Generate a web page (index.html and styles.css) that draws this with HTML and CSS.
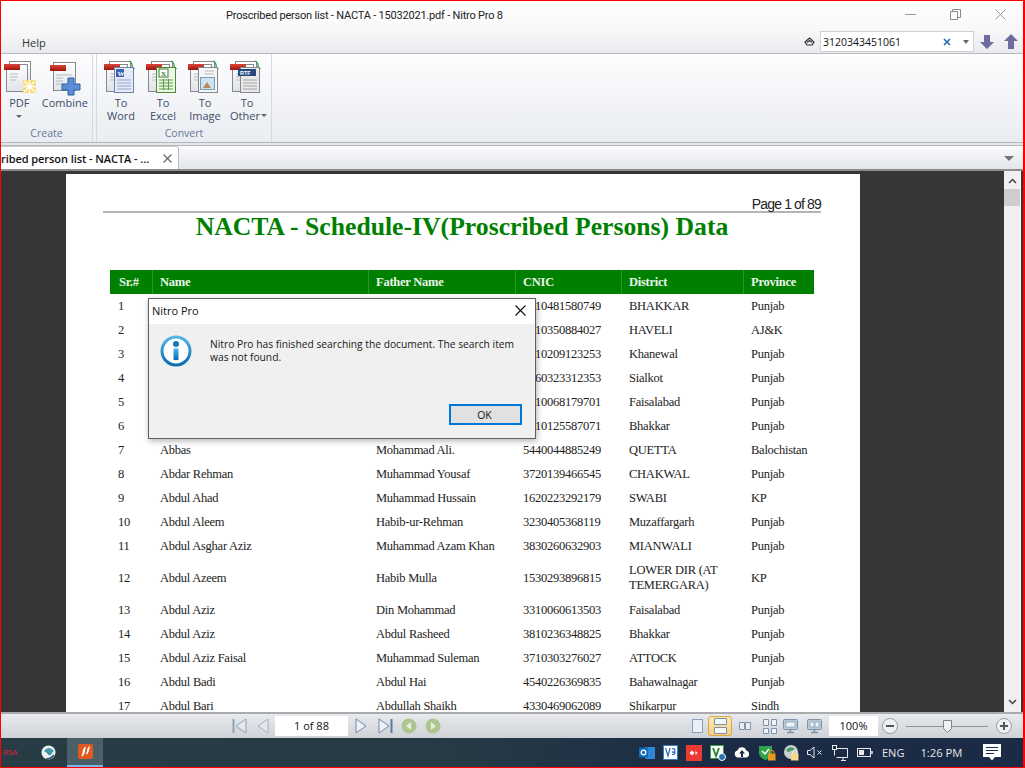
FILE: index.html
```html
<!DOCTYPE html>
<html lang="en">
<head>
<meta charset="utf-8">
<title>Nitro Pro 8</title>
<link rel="stylesheet" href="styles.css">
</head>
<body>
<svg class="defs" width="0" height="0" aria-hidden="true">
  <defs>
    <linearGradient id="pg" x1="0" y1="0" x2="0" y2="1"><stop offset="0" stop-color="#fff"/><stop offset="1" stop-color="#dfe2e6"/></linearGradient>
    <linearGradient id="red" x1="0" y1="0" x2="0" y2="1"><stop offset="0" stop-color="#d8463a"/><stop offset="1" stop-color="#9e1610"/></linearGradient>
    <linearGradient id="info" x1="0" y1="0" x2="0" y2="1"><stop offset="0" stop-color="#54b4e8"/><stop offset="1" stop-color="#0a6cb4"/></linearGradient>
    <symbol id="sheet" viewBox="0 0 36 36">
      <rect x="6.5" y="1.5" width="21" height="27" fill="url(#pg)" stroke="#85888c"/>
      <rect x="3.5" y="4.5" width="21" height="27" fill="url(#pg)" stroke="#85888c"/>
      <rect x="1" y="4" width="16" height="6" fill="url(#red)"/>
      <path d="M7 14h8M7 17h8M7 20h6" stroke="#b8bbc0"/>
    </symbol>
    <symbol id="return" viewBox="0 0 36 36">
      <path d="M26 1q4 2 3 7" fill="none" stroke="#3d9a46" stroke-width="1.3"/>
      <path d="M26 8h6l-3 4z" fill="#2d8a3a"/>
    </symbol>
  </defs>
</svg>

<div class="app">
  <header class="titlebar">
    <span class="title">Proscribed person list - NACTA - 15032021.pdf - Nitro Pro 8</span>
    <div class="winctl">
      <svg width="11" height="11" viewBox="0 0 11 11"><path d="M0 5.5h11" stroke="#9a9a9a"/></svg>
      <svg width="11" height="11" viewBox="0 0 11 11"><path d="M.5 2.5h7v8h-7zM2.5 2.5v-2h8v8h-3" fill="none" stroke="#8a8a8a"/></svg>
      <svg width="11" height="11" viewBox="0 0 11 11"><path d="M.5.5l10 10M10.5.5l-10 10" stroke="#9a9a9a"/></svg>
    </div>
  </header>

  <div class="menubar">
    <span class="menu-help">Help</span>
    <div class="searchtools">
      <svg class="collapse" width="11" height="9" viewBox="0 0 11 9"><path d="M1 5l4.500-4 4.500 4-2 3h-5zM3 5.500l2.500-2 2.500 2" fill="none" stroke="#333" stroke-width="1.2"/></svg>
      <div class="searchbox">
        <span class="searchtext">3120343451061</span>
        <svg width="8" height="8" viewBox="0 0 8 8"><path d="M1 1l6 6M7 1l-6 6" stroke="#2b6ca8" stroke-width="1.600"/></svg>
        <span class="caret-down"></span>
      </div>
      <svg class="arrow" width="14" height="15" viewBox="0 0 14 15"><path d="M4 1h6v7h4l-7 7-7-7h4z" fill="#6e6c9c"/></svg>
      <svg class="arrow" width="14" height="15" viewBox="0 0 14 15"><path d="M7 0l7 7h-4v8H4V7H0z" fill="#6e6c9c"/></svg>
    </div>
  </div>

  <div class="ribbon">
    <section class="group group-create">
      <div class="buttons">
        <div class="rbtn rbtn-pdf">
          <svg class="ricon" width="36" height="36" viewBox="-2 0 36 36">
            <use href="#sheet"/>
            <rect x="20" y="20" width="13" height="13" fill="#f6dc78"/>
            <path d="M26.500 20v13M20 26.500h13M21 21l11 11M32 21l-11 11" stroke="#fff" stroke-width="1.300"/>
          </svg>
          <span>PDF</span>
          <span class="caret-small"></span>
        </div>
        <div class="rbtn rbtn-combine">
          <svg class="ricon" width="36" height="36" viewBox="0 0 36 36">
            <rect x="6.500" y="2.500" width="22" height="28" fill="url(#pg)" stroke="#85888c"/>
            <rect x="3" y="5" width="16" height="6" fill="url(#red)"/>
            <path d="M9 15h16M9 18h7M9 21h7M9 24h7" stroke="#b8bbc0"/>
            <path d="M21 18h6v6h6v6h-6v5h-6v-5h-6v-6h6z" fill="#5b8ed6" stroke="#2f5f9f"/>
          </svg>
          <span>Combine</span>
        </div>
      </div>
      <div class="group-label">Create</div>
    </section>
    <section class="group group-convert">
      <div class="buttons">
        <div class="rbtn">
          <svg class="ricon" width="36" height="36" viewBox="0 0 36 36">
            <use href="#sheet"/><use href="#return"/>
            <rect x="11.500" y="7.500" width="19" height="25" fill="#e4ebf8" stroke="#6d83ac"/>
            <rect x="13" y="9" width="8" height="8" fill="#3d63b0"/>
            <text class="icon-letter" x="14.500" y="16">W</text>
            <path d="M14 20h14M14 23h14M14 26h14M14 29h14" stroke="#90a6cf"/>
          </svg>
          <span>To</span><span>Word</span>
        </div>
        <div class="rbtn">
          <svg class="ricon" width="36" height="36" viewBox="0 0 36 36">
            <use href="#sheet"/><use href="#return"/>
            <rect x="11.500" y="7.500" width="19" height="25" fill="#eef6e8" stroke="#4f8a3a"/>
            <rect x="14" y="9" width="9" height="8" fill="#fff" stroke="#3d8030"/>
            <text class="icon-letter icon-letter-x" x="16" y="16">X</text>
            <path d="M14 20h14M14 23h14M14 26h14M14 29h14M18.500 19v11M23.500 19v11" stroke="#5d9c46"/>
          </svg>
          <span>To</span><span>Excel</span>
        </div>
        <div class="rbtn">
          <svg class="ricon" width="36" height="36" viewBox="0 0 36 36">
            <use href="#sheet"/><use href="#return"/>
            <rect x="11.500" y="7.500" width="19" height="25" fill="#f4f5f6" stroke="#85888c"/>
            <path d="M18 11h9M18 14h9" stroke="#b8bbc0"/>
            <rect x="13.500" y="17.500" width="14" height="12" fill="#cfe3ee" stroke="#7f9cae"/>
            <path d="M16 28l4-6 4 6z" fill="#b58a62"/>
          </svg>
          <span>To</span><span>Image</span>
        </div>
        <div class="rbtn">
          <svg class="ricon" width="36" height="36" viewBox="0 0 36 36">
            <use href="#sheet"/><use href="#return"/>
            <rect x="11.500" y="7.500" width="19" height="25" fill="#e8e8e8" stroke="#85888c"/>
            <rect x="9" y="9" width="18" height="7" fill="#24477f"/>
            <text class="icon-letter icon-letter-rtf" x="11" y="15">RTF</text>
            <path d="M14 20h14M14 23h14M14 26h14M14 29h14" stroke="#a4a6a8"/>
          </svg>
          <span>To</span><span class="with-caret">Other<i class="caret-small"></i></span>
        </div>
      </div>
      <div class="group-label">Convert</div>
    </section>
  </div>

  <div class="tabbar">
    <div class="tab">
      <span class="tab-name">ribed person list - NACTA - ...</span>
      <svg width="9" height="9" viewBox="0 0 9 9"><path d="M.5.5l8 8M8.500.5l-8 8" stroke="#6a6a6a" stroke-width="1.200"/></svg>
    </div>
    <span class="tab-menu"></span>
  </div>

  <main class="docarea">
    <div class="viewport">
      <article class="page">
        <div class="pageno">Page 1 of 89</div>
        <h1 class="doctitle">NACTA - Schedule-IV(Proscribed Persons) Data</h1>
        <div class="table">
          <div class="row head"><div>Sr.#</div><div>Name</div><div>Father Name</div><div>CNIC</div><div>District</div><div>Province</div></div>
          <div class="row"><div>1</div><div></div><div></div><div class="cut">10481580749</div><div>BHAKKAR</div><div>Punjab</div></div>
          <div class="row"><div>2</div><div></div><div></div><div class="cut">10350884027</div><div>HAVELI</div><div>AJ&amp;K</div></div>
          <div class="row"><div>3</div><div></div><div></div><div class="cut">10209123253</div><div>Khanewal</div><div>Punjab</div></div>
          <div class="row"><div>4</div><div></div><div></div><div class="cut">60323312353</div><div>Sialkot</div><div>Punjab</div></div>
          <div class="row"><div>5</div><div></div><div></div><div class="cut">10068179701</div><div>Faisalabad</div><div>Punjab</div></div>
          <div class="row"><div>6</div><div></div><div></div><div class="cut">10125587071</div><div>Bhakkar</div><div>Punjab</div></div>
          <div class="row"><div>7</div><div>Abbas</div><div>Mohammad Ali.</div><div>5440044885249</div><div>QUETTA</div><div>Balochistan</div></div>
          <div class="row"><div>8</div><div>Abdar Rehman</div><div>Muhammad Yousaf</div><div>3720139466545</div><div>CHAKWAL</div><div>Punjab</div></div>
          <div class="row"><div>9</div><div>Abdul Ahad</div><div>Muhammad Hussain</div><div>1620223292179</div><div>SWABI</div><div>KP</div></div>
          <div class="row"><div>10</div><div>Abdul Aleem</div><div>Habib-ur-Rehman</div><div>3230405368119</div><div>Muzaffargarh</div><div>Punjab</div></div>
          <div class="row"><div>11</div><div>Abdul Asghar Aziz</div><div>Muhammad Azam Khan</div><div>3830260632903</div><div>MIANWALI</div><div>Punjab</div></div>
          <div class="row tall"><div>12</div><div>Abdul Azeem</div><div>Habib Mulla</div><div>1530293896815</div><div>LOWER DIR (AT TEMERGARA)</div><div>KP</div></div>
          <div class="row"><div>13</div><div>Abdul Aziz</div><div>Din Mohammad</div><div>3310060613503</div><div>Faisalabad</div><div>Punjab</div></div>
          <div class="row"><div>14</div><div>Abdul Aziz</div><div>Abdul Rasheed</div><div>3810236348825</div><div>Bhakkar</div><div>Punjab</div></div>
          <div class="row"><div>15</div><div>Abdul Aziz Faisal</div><div>Muhammad Suleman</div><div>3710303276027</div><div>ATTOCK</div><div>Punjab</div></div>
          <div class="row"><div>16</div><div>Abdul Badi</div><div>Abdul Hai</div><div>4540226369835</div><div>Bahawalnagar</div><div>Punjab</div></div>
          <div class="row"><div>17</div><div>Abdul Bari</div><div>Abdullah Shaikh</div><div>4330469062089</div><div>Shikarpur</div><div>Sindh</div></div>
        </div>
      </article>
    </div>
    <div class="scrollbar">
      <svg class="sb-arrow" width="9" height="6" viewBox="0 0 9 6"><path d="M1 5l3.500-3.500L8 5" fill="none" stroke="#444" stroke-width="1.500"/></svg>
      <div class="sb-thumb"></div>
      <svg class="sb-arrow sb-bottom" width="9" height="6" viewBox="0 0 9 6"><path d="M1 1l3.500 3.500L8 1" fill="none" stroke="#444" stroke-width="1.500"/></svg>
    </div>
  </main>

  <footer class="statusbar">
    <div class="nav">
      <svg width="15" height="16" viewBox="0 0 15 16"><path d="M1.500 1v14" stroke="#8fa3b8" stroke-width="2"/><path d="M14 1v14L4 8z" fill="#e4e8ee" stroke="#8fa3b8"/></svg>
      <svg width="13" height="16" viewBox="0 0 13 16"><path d="M12 1v14L2 8z" fill="#e4e8ee" stroke="#a4b2c2"/></svg>
      <div class="pagebox">1 of 88</div>
      <svg width="13" height="16" viewBox="0 0 13 16"><path d="M1 1v14l10-7z" fill="#eef1f6" stroke="#6f8bab"/></svg>
      <svg class="nav-last" width="15" height="16" viewBox="0 0 15 16"><path d="M1 1v14l10-7z" fill="#eef1f6" stroke="#6f8bab"/><path d="M13.500 1v14" stroke="#5a7a9e" stroke-width="2"/></svg>
      <svg class="nav-back" width="16" height="16" viewBox="0 0 16 16"><circle cx="8" cy="8" r="7.500" fill="#aec592"/><path d="M10 4v8L5 8z" fill="#e8efdc"/></svg>
      <svg class="nav-fwd" width="16" height="16" viewBox="0 0 16 16"><circle cx="8" cy="8" r="7.500" fill="#aec592"/><path d="M6 4v8l5-4z" fill="#e8efdc"/></svg>
    </div>
    <div class="viewtools">
      <svg width="11" height="14" viewBox="0 0 11 14"><rect x=".5" y=".5" width="10" height="13" fill="#eaf0f7" stroke="#8aa0b8"/></svg>
      <div class="view-on"><svg width="13" height="16" viewBox="0 0 13 16"><path d="M.5.500h12v6H.5zM.5 9.500h12v6H.5z" fill="#f4f7fb" stroke="#7d93ad"/></svg></div>
      <svg class="vt-two" width="12" height="10" viewBox="0 0 12 10"><path d="M.5 1.500h5v7h-5zM6.500 1.500h5v7h-5z" fill="#e8eef5" stroke="#7d93ad"/></svg>
      <svg class="vt-four" width="16" height="15" viewBox="0 0 16 15"><path d="M1.500.500h5v6h-5zM9.500.500h5v6h-5zM1.500 9.500h5v5h-5zM9.500 9.500h5v5h-5z" fill="#f0f4f8" stroke="#7d93ad"/></svg>
      <svg class="vt-screen" width="15" height="15" viewBox="0 0 15 15"><rect x=".5" y=".5" width="14" height="10" rx="1" fill="#b8cbdc" stroke="#7f93a8"/><rect x="3" y="3" width="9" height="5" fill="#edf2f7" stroke="#7f93a8" stroke-width=".6"/><path d="M4 13.500h7M7.500 11v2" stroke="#8494a4" stroke-width="1.500"/></svg>
      <svg class="vt-screen2" width="15" height="15" viewBox="0 0 15 15"><rect x=".5" y=".5" width="14" height="10" rx="1" fill="#b8cbdc" stroke="#7f93a8"/><path d="M3 3h4v5H3zM8 3h4v5H8z" fill="#edf2f7" stroke="#7f93a8" stroke-width=".6"/><path d="M4 13.500h7M7.500 11v2" stroke="#8494a4" stroke-width="1.500"/></svg>
      <div class="zoombox">100%</div>
      <svg class="zm-minus" width="16" height="16" viewBox="0 0 16 16"><circle cx="8" cy="8" r="7.500" fill="#eef0f3" stroke="#9a9fa6"/><path d="M4 8h8" stroke="#555" stroke-width="2"/></svg>
      <div class="slider"><svg class="thumb" width="9" height="13" viewBox="0 0 9 13"><path d="M.5.500h8v8l-4 4-4-4z" fill="#eef0f3" stroke="#80858c"/></svg></div>
      <svg class="zm-plus" width="16" height="16" viewBox="0 0 16 16"><circle cx="8" cy="8" r="7.500" fill="#eef0f3" stroke="#9a9fa6"/><path d="M4 8h8M8 4v8" stroke="#555" stroke-width="2"/></svg>
    </div>
  </footer>

  <div class="taskbar">
    <span class="rsa">RSA</span>
    <svg class="tb-globe" width="15" height="15" viewBox="0 0 15 15"><circle cx="7.500" cy="7.500" r="7" fill="#eef2f2"/><path d="M3 6q5-6 10 0-2 1-3 4-3 1-4-2z" fill="#3f97a8"/><path d="M5 14q5 0 8-4" fill="none" stroke="#27506b" stroke-width="1.500"/></svg>
    <div class="tb-app">
      <svg width="15" height="15" viewBox="0 0 15 15"><rect width="15" height="15" rx="2" fill="#e0591f"/><path d="M3.500 13l1.500-7q.5-3 3-3.500L6.500 9q-.5 2.500-3 4zM8 10.500l1.500-6q.5-2 2.500-2.500l-1.300 5.500q-.5 2.500-2.700 3z" fill="#fff"/></svg>
    </div>
    <div class="tray">
      <svg width="16" height="15" viewBox="0 0 16 15"><rect x="6" y="2" width="10" height="12" fill="#2f86d0"/><rect y="2.500" width="9" height="10" fill="#0f6cbd"/><circle cx="4.500" cy="7.500" r="2.300" fill="none" stroke="#fff" stroke-width="1.300"/></svg>
      <svg class="t-v2" width="15" height="15" viewBox="0 0 15 15"><rect width="15" height="15" fill="#fff"/><rect x=".5" y=".5" width="14" height="14" fill="none" stroke="#3d79c4"/><path d="M2.500 3l2.500 8 2-8M9 4q3-1 3 1.500T9 7q3-.5 3 1t-3 1.500" fill="none" stroke="#2f6cb8" stroke-width="1.200"/></svg>
      <svg class="t-red" width="16" height="16" viewBox="0 0 16 16"><rect width="16" height="16" fill="#ea3a32"/><path d="M3.500 8l2.500-2.500L8.500 8 6 10.500z M9.500 6l2 2-2 2z" fill="#fff"/></svg>
      <svg class="t-v" width="16" height="16" viewBox="0 0 16 16"><rect x=".5" y=".5" width="13" height="13" fill="#fff" stroke="#3a9a46"/><path d="M3 3l3 8 3-8" fill="none" stroke="#2d8a3a" stroke-width="2"/><circle cx="12" cy="12" r="3.500" fill="#2b6cab" stroke="#fff"/></svg>
      <svg class="t-cloud" width="16" height="11" viewBox="0 0 16 11"><path d="M4 10.500a3.500 3.500 0 0 1-.5-6.900 4.500 4.500 0 0 1 8.700 0A3.500 3.500 0 0 1 12 10.500z" fill="#fff"/><path d="M8 3l3 3.500H9V10H7V6.500H5z" fill="#1b2b45"/></svg>
      <svg class="t-shield" width="17" height="16" viewBox="0 0 17 16"><path d="M0 1h13v8q-1 4-6.500 6Q1 13 0 9z" fill="#2fa24a"/><path d="M3 6l3 3 4-5" fill="none" stroke="#fff" stroke-width="1.500"/><rect x="9" y="8.500" width="7.500" height="7" fill="#e79a1f"/><path d="M10.500 8.500V7a2.300 2.300 0 0 1 4.500 0v1.500" fill="none" stroke="#e79a1f"/></svg>
      <svg class="t-lock" width="15" height="16" viewBox="0 0 15 16"><circle cx="7" cy="7" r="7" fill="#c9d2cf"/><path d="M2 5q4-5 9-1-2 2-5 2-1 3-4-1z" fill="#4d9a68"/><rect x="7" y="8.500" width="7.500" height="7" fill="#f3d98a"/><path d="M8.500 8.500V7a2.300 2.300 0 0 1 4.500 0v1.500" fill="none" stroke="#f3f3f3"/></svg>
      <svg class="t-spk" width="16" height="13" viewBox="0 0 16 13"><path d="M.5 4.500h2.500L7 1v11L3 8.500H.5z" fill="none" stroke="#e6e8ea"/><path d="M10.500 4.500l4 4M14.500 4.500l-4 4" stroke="#e6e8ea"/></svg>
      <svg class="t-net" width="16" height="16" viewBox="0 0 16 16"><path d="M4.500 3.500h11v9h-11M9 15.500h5M11 12.500v3" fill="none" stroke="#e6e8ea"/><rect x=".5" y=".5" width="4" height="4" fill="#1b2b45" stroke="#e6e8ea"/><path d="M2.500 4.500v6" stroke="#e6e8ea"/></svg>
      <svg class="t-bat" width="16" height="9" viewBox="0 0 16 9"><rect x=".5" y=".5" width="13" height="8" fill="none" stroke="#e6e8ea"/><rect x="2" y="2" width="5" height="5" fill="#e6e8ea"/><path d="M15 3v3" stroke="#e6e8ea" stroke-width="1.500"/></svg>
      <span class="t-eng">ENG</span>
      <span class="t-time">1:26 PM</span>
      <svg class="t-note" width="18" height="17" viewBox="0 0 18 17"><path d="M0 0h18v13h-6l-3 3.500L6 13H0z" fill="#fff"/><path d="M3 3.500h12M3 6.500h12M3 9.500h8" stroke="#1b2b45"/></svg>
    </div>
  </div>

  <div class="dialog" role="dialog">
    <div class="dlg-title">
      <span>Nitro Pro</span>
      <svg width="11" height="11" viewBox="0 0 11 11"><path d="M.5.500l10 10M10.500.500l-10 10" stroke="#111" stroke-width="1.100"/></svg>
    </div>
    <div class="dlg-body">
      <svg class="dlg-icon" width="32" height="32" viewBox="0 0 32 32">
        <circle cx="16" cy="16" r="14" fill="#fff" stroke="url(#info)" stroke-width="3"/>
        <circle cx="16" cy="9" r="3" fill="#0f78bf"/>
        <path d="M13.500 13.500h5v11.500h-5z" fill="url(#info)"/>
      </svg>
      <p class="dlg-text">Nitro Pro has finished searching the document. The search item was not found.</p>
    </div>
    <div class="dlg-foot"><div class="dlg-ok">OK</div></div>
  </div>
</div>
</body>
</html>
```

FILE: styles.css
```css
* { box-sizing: border-box; }
html, body { margin: 0; padding: 0; }
body { width: 1025px; height: 768px; overflow: hidden; font-family: "Open Sans", "Noto Sans", sans-serif; }
.defs { position: absolute; }

.app {
  position: relative;
  width: 1025px;
  height: 768px;
  display: flex;
  flex-direction: column;
  border: solid #f00;
  border-width: 1px 2px 1px 1px;
  background: #e4e6ea;
  overflow: hidden;
}

/* title */
.titlebar {
  flex: none;
  height: 29px;
  position: relative;
  display: flex;
  align-items: center;
  padding-left: 225px;
  background: linear-gradient(#fff, #f8f8f9);
}
.title { font-family: Roboto, sans-serif; font-size: 11px; letter-spacing: -.2px; color: #222; }
.winctl { position: absolute; right: 17px; top: 8px; display: flex; gap: 34px; }

.menubar {
  flex: none;
  height: 24px;
  display: flex;
  align-items: center;
  justify-content: space-between;
  padding: 0 5px 0 21px;
  background: linear-gradient(#f8f8f9, #e9eaee);
  border-bottom: 1px solid #b6b9bf;
}
.menu-help { font-size: 11px; color: #333; margin-top: 2px; }
.searchtools { display: flex; align-items: center; }
.collapse { margin-right: 5px; }
.searchbox {
  width: 154px;
  height: 21px;
  display: flex;
  align-items: center;
  padding: 0 4px 0 2px;
  background: #fff;
  border: 1px solid #cfd1d5;
}
.searchtext { flex: 1; font-size: 10.5px; color: #111; }
.caret-down { width: 0; height: 0; margin-left: 12px; border: 3.5px solid transparent; border-top: 4px solid #666; border-bottom: 0; }
.arrow { margin-left: 6px; }
.arrow + .arrow { margin-left: 10px; }

/* ribbon */
.ribbon {
  flex: none;
  height: 89px;
  display: flex;
  gap: 3px;
  background: linear-gradient(#fdfdfe, #e9ecf1);
  border-bottom: 1px solid #b3b6bb;
}
.group {
  display: flex;
  flex-direction: column;
  height: 88px;
  border-right: 1px solid #d4d9e2;
}
.group-create { width: 92px; }
.group-convert { width: 176px; border-left: 1px solid #d4d9e2; }
.buttons { flex: none; height: 69px; display: flex; }
.group-convert .buttons { padding-left: 3px; }
.rbtn {
  width: 42px;
  display: flex;
  flex-direction: column;
  align-items: center;
  padding-top: 5px;
  font-size: 11px;
  line-height: 13px;
  color: #3e4d68;
}
.ricon { flex: none; margin-top: 1px; height: 36px; }
.rbtn-pdf { width: 37px; }
.rbtn-combine { width: 55px; }
.caret-small {
  display: block;
  width: 0;
  height: 0;
  margin-top: 6px;
  border: 3px solid transparent;
  border-top: 3px solid #666;
  border-bottom: 0;
}
.with-caret { display: flex; align-items: center; margin-left: 3px; }
.with-caret .caret-small { margin: 0 0 0 1px; }
.group-label { height: 20px; text-align: center; font-size: 10.5px; line-height: 20px; color: #69789a; }
.icon-letter { font: bold 7px "Liberation Serif", serif; fill: #fff; }
.icon-letter-x { fill: #2d7a2a; }
.icon-letter-rtf { font: bold 5.5px "Liberation Sans", sans-serif; }

/* tabs */
.tabbar {
  flex: none;
  height: 26px;
  display: flex;
  justify-content: space-between;
  align-items: flex-end;
  margin-top: 2px;
  padding-right: 9px;
  border-top: 1px solid #b3b6bb;
  background: linear-gradient(#fbfbfc, #e2e5eb);
  border-bottom: 2px solid #8d8d8d;
}
.tab {
  width: 178px;
  height: 23px;
  display: flex;
  align-items: center;
  justify-content: space-between;
  padding-right: 6px;
  background: #fff;
  border-right: 1px solid #b9bcc2;
  border-top: 1px solid #c8cbd0;
  border-top-right-radius: 3px;
  overflow: hidden;
}
.tab-name { font-size: 11px; font-weight: 600; letter-spacing: -.07px; color: #111; white-space: nowrap; }
.tab-menu { width: 0; height: 0; margin-bottom: 8px; border: 5px solid transparent; border-top: 5px solid #757575; border-bottom: 0; }

/* document */
.docarea {
  flex: 1;
  min-height: 0;
  display: flex;
  background: #363636;
}
.viewport { flex: 1; min-width: 0; overflow: hidden; padding: 3px 0 0 65px; }
.page { width: 794px; height: 700px; padding: 21px 39px 0 37px; background: #fff; }
.pageno {
  height: 18px;
  text-align: right;
  font: 14px/18px "Liberation Sans", sans-serif;
  letter-spacing: -.85px;
  color: #222;
  border-bottom: 2px solid #b4b4b4;
}
.doctitle {
  margin: -1px 0 0;
  height: 58px;
  text-align: center;
  font: bold 25.7px/30px "Liberation Serif", serif;
  color: #008000;
}
.table { margin: 0 7px; width: 704px; font: 12.5px/15px "Liberation Serif", serif; letter-spacing: -.25px; color: #222; }
.row {
  display: grid;
  grid-template-columns: 42px 216px 147px 106px 122px 71px;
  height: 24px;
}
.row > div { display: flex; align-items: center; padding-left: 8px; }
.row.tall { height: 40px; }
.head { background: #008000; color: #eaf5ea; font-weight: bold; }
.head > div { border-left: 1px solid #2c962c; padding-left: 7px; }
.head > div:first-child { border-left: 0; padding-left: 9px; }
.row > .cut { padding-left: 20px; }

.scrollbar {
  flex: none;
  width: 17px;
  margin-right: 2px;
  display: flex;
  flex-direction: column;
  align-items: center;
  background: #f0f0f0;
  position: relative;
  border-right: 1px solid #fff;
}
.sb-arrow { margin-top: 7px; }
.sb-thumb { width: 100%; height: 17px; margin-top: 5px; background: #cdcdcd; }
.sb-bottom { margin-top: auto; margin-bottom: 7px; }

/* status */
.statusbar {
  flex: none;
  height: 26px;
  display: flex;
  align-items: center;
  background: linear-gradient(#e8eaee, #ced1d6);
  border-top: 2px solid #a9abae;
}
.nav { display: flex; align-items: center; padding-left: 231px; gap: 9px; }
.pagebox, .zoombox {
  height: 20px;
  background: #fff;
  text-align: center;
  font-size: 11px;
  line-height: 20px;
  color: #111;
}
.pagebox { width: 73px; margin: 0 -2px 0 -3px; }
.nav-last { margin-left: 1px; }
.nav-back { margin-left: -1px; }
.nav-fwd { margin-left: -1px; }
.viewtools { display: flex; align-items: center; margin-left: auto; padding-right: 11px; }
.view-on {
  width: 24px;
  height: 20px;
  margin-left: 5px;
  display: flex;
  align-items: center;
  justify-content: center;
  background: linear-gradient(#fbe8b4, #f5cf7e);
  border: 1px solid #d8a94e;
  border-radius: 3px;
}
.vt-two { margin-left: 7px; }
.vt-four { margin-left: 11px; }
.vt-screen { margin-left: 5px; }
.vt-screen2 { margin-left: 9px; }
.zoombox { width: 49px; margin-left: 7px; }
.zm-minus { margin-left: 4px; }
.slider { width: 82px; height: 1px; margin-left: 8px; background: #8f9296; position: relative; }
.thumb { position: absolute; left: 37px; top: -6px; }
.zm-plus { margin-left: 8px; }

/* taskbar */
.taskbar {
  flex: none;
  height: 29px;
  display: flex;
  align-items: center;
  background: linear-gradient(90deg, #273c45, #263a45 45%, #1b2b45 70%);
  padding-left: 2px;
}
.rsa { width: 38px; font: 7px "Liberation Sans", sans-serif; color: #e0203a; }
.tb-globe { flex: none; }
.tb-app {
  width: 36px;
  height: 29px;
  margin-left: 11px;
  display: flex;
  align-items: center;
  justify-content: center;
  background: #4a5f68;
  border-bottom: 2px solid #76b9ed;
}
.tray { display: flex; align-items: center; margin-left: 536px; }
.t-v2 { margin-left: 8px; }
.t-red { margin-left: 8px; }
.t-v { margin-left: 8px; }
.t-cloud { margin-left: 8px; }
.t-shield { margin-left: 9px; }
.t-lock { margin-left: 8px; }
.t-spk { margin-left: 8px; }
.t-net { margin-left: 9px; }
.t-bat { margin-left: 9px; }
.t-eng { margin-left: 9px; font-size: 11px; color: #e6e8ea; }
.t-time { margin-left: 16px; font-size: 11.25px; color: #e6e8ea; }
.t-note { margin-left: 21px; }

/* dialog */
.dialog {
  position: absolute;
  left: 147px;
  top: 297px;
  width: 388px;
  height: 141px;
  display: flex;
  flex-direction: column;
  background: #f0f0f0;
  border: 1px solid #5f6062;
  box-shadow: 1px 2px 6px rgba(0, 0, 0, .3);
}
.dlg-title {
  flex: none;
  height: 25px;
  display: flex;
  align-items: center;
  justify-content: space-between;
  padding: 0 9px 2px 3px;
  background: #fff;
  font-size: 11px;
  color: #111;
}
.dlg-body { flex: 1; display: flex; padding: 11px 8px 0 11px; }
.dlg-icon { flex: none; }
.dlg-text { width: 316px; margin: 3px 0 0 18px; font-size: 10.25px; line-height: 13px; color: #1a1a1a; }
.dlg-foot { flex: none; display: flex; justify-content: flex-end; padding: 0 13px 13px 0; }
.dlg-ok {
  width: 73px;
  height: 21px;
  padding-right: 2px;
  text-align: center;
  font-size: 10.5px;
  line-height: 18px;
  color: #111;
  background: #e1e1e1;
  border: 2px solid #0078d7;
}
```
